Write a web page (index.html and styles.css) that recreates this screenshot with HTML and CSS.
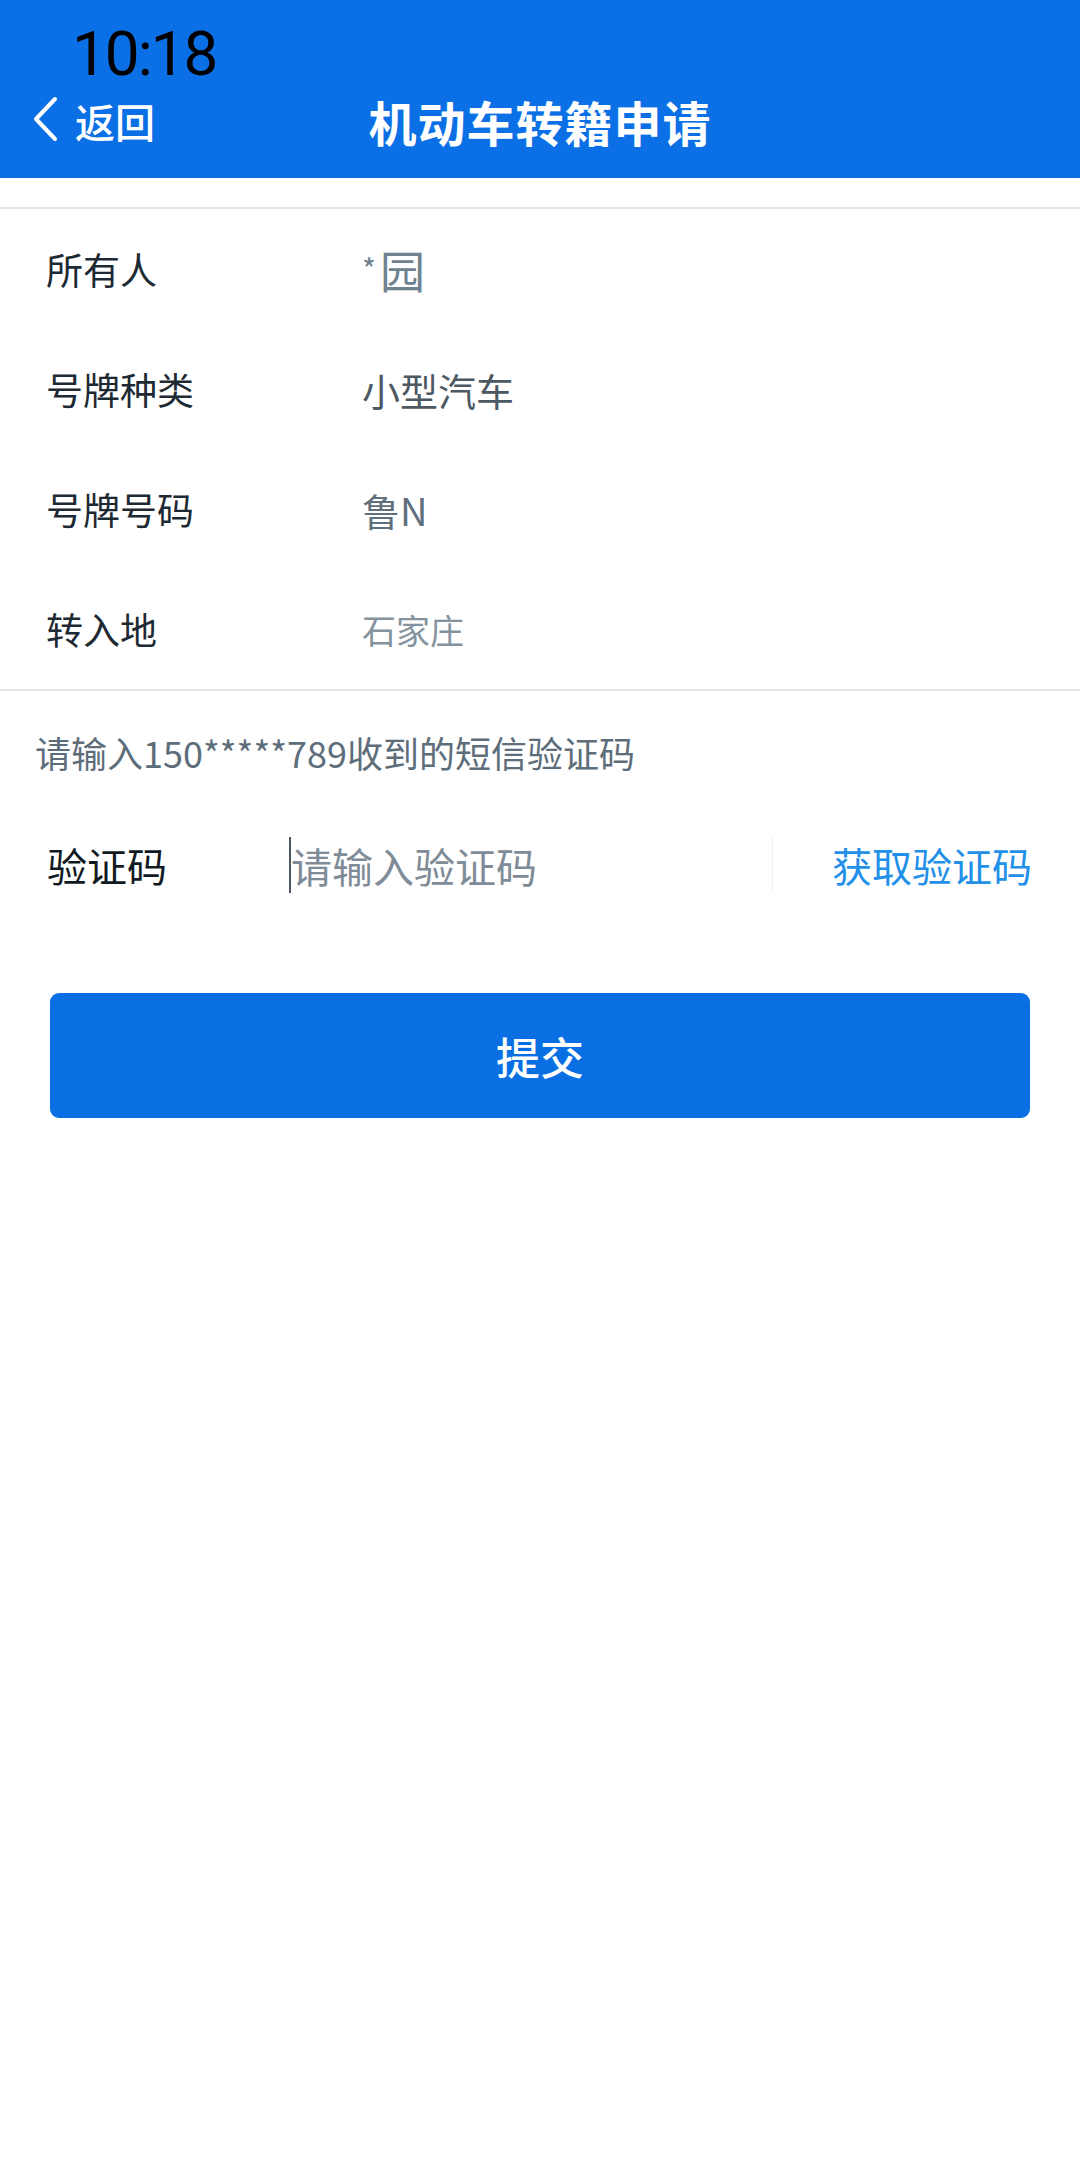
FILE: index.html
```html
<!DOCTYPE html>
<html lang="zh-CN">
<head>
    <meta charset="UTF-8">
    <meta name="viewport" content="width=device-width, initial-scale=1.0">
    <title>机动车转籍申请</title>
    <link rel="stylesheet" href="styles.css">
</head>
<body>
    <div class="nav">
        <div class="status">10:18</div>
        <div class="titlebar">
            <div class="back">
                <svg width="28" height="46" viewBox="0 0 28 46"><path d="M24 3 L5 23 L24 43" fill="none" stroke="#fff" stroke-width="4" stroke-linecap="round" stroke-linejoin="round"/></svg>
                <span>返回</span>
            </div>
            <h1>机动车转籍申请</h1>
            <div></div>
        </div>
    </div>

    <div class="info">
        <div class="row"><span class="label">所有人</span><span class="value owner"><span class="star">*</span>园</span></div>
        <div class="row"><span class="label">号牌种类</span><span class="value">小型汽车</span></div>
        <div class="row"><span class="label">号牌号码</span><span class="value plate">鲁N</span></div>
        <div class="row"><span class="label">转入地</span><span class="value light">石家庄</span></div>
    </div>

    <div class="hint">请输入150*****789收到的短信验证码</div>

    <div class="code-row">
        <span class="code-label">验证码</span>
        <div class="code-input"><span class="cursor"></span>请输入验证码</div>
        <span class="code-btn">获取验证码</span>
    </div>

    <div class="submit">提交</div>
</body>
</html>
```

FILE: styles.css
```css
body {
    margin: 0;
    background: #fff;
    font-family: "Noto Sans CJK SC", "Noto Sans", sans-serif;
    color: #1e2a33;
}
.nav {
    background: #0b70e5;
    height: 178px;
    box-sizing: border-box;
}
.status {
    height: 78px;
    padding-left: 72px;
    font-family: Roboto, "Liberation Sans", sans-serif;
    font-size: 62px;
    line-height: 108px;
    letter-spacing: -2px;
    color: #000;
    box-sizing: border-box;
}
.titlebar {
    height: 86px;
    display: grid;
    grid-template-columns: 1fr auto 1fr;
    align-items: center;
}
.back {
    display: flex;
    align-items: center;
    gap: 16px;
    padding-left: 31px;
    color: #fff;
    font-size: 40px;
    font-weight: 500;
}
.back svg {
    margin-top: -4px;
}
.titlebar h1 {
    margin: 0;
    color: #fff;
    font-size: 48px;
    font-weight: 700;
    letter-spacing: 1px;
}
.info {
    margin-top: 29px;
    border-top: 2px solid #dde6ec;
    border-bottom: 2px solid #e2e8ec;
}
.row {
    height: 120px;
    display: flex;
    align-items: center;
}
.label {
    width: 316px;
    padding-left: 46px;
    font-size: 37px;
    color: #1e2a33;
}
.value {
    font-size: 38px;
    color: #4c5862;
}
.owner {
    font-size: 45px;
    color: #6f8290;
}
.star {
    font-size: 30px;
    margin-right: 4px;
    vertical-align: 8px;
}
.plate {
    color: #5f6f7c;
}
.light {
    font-size: 34px;
    color: #84939e;
}
.hint {
    padding: 22px 0 0 35px;
    height: 78px;
    line-height: 78px;
    font-size: 36px;
    color: #5d6d7a;
}
.code-row {
    margin-top: 24px;
    height: 100px;
    display: flex;
    align-items: center;
}
.code-label {
    width: 242px;
    padding-left: 47px;
    font-size: 40px;
    color: #111a22;
}
.code-input {
    flex: 1;
    display: flex;
    align-items: center;
    height: 56px;
    font-size: 41px;
    color: #7f8c97;
    border-right: 1px solid #eef1f3;
}
.cursor {
    width: 2px;
    height: 56px;
    background: #4a5662;
}
.code-btn {
    width: 307px;
    padding-left: 59px;
    box-sizing: border-box;
    white-space: nowrap;
    font-size: 40px;
    color: #2290e8;
}
.submit {
    margin: 78px 50px 0;
    height: 125px;
    background: #0a6fe2;
    border-radius: 9px;
    display: flex;
    align-items: center;
    justify-content: center;
    color: #fff;
    font-size: 44px;
    font-weight: 500;
}
```
